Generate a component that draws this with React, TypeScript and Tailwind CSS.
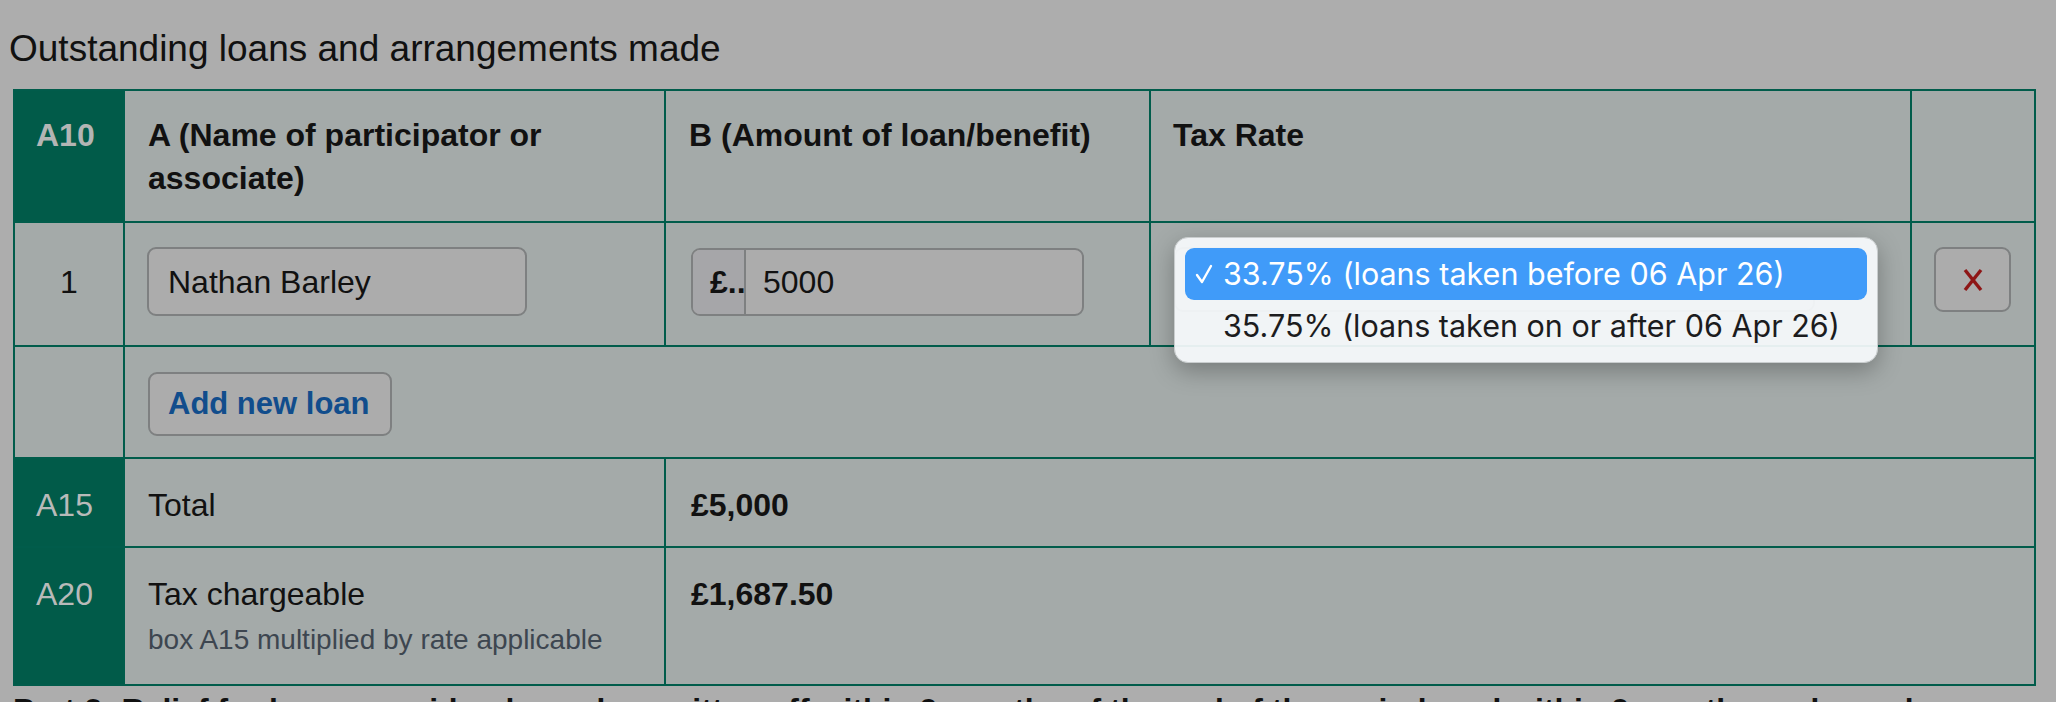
import React from "react";

const cell = "border-r-2 border-b-2 border-[#015c4b]";
const grey = "bg-[#a4aaa9]";
const green = "bg-[#015b49]";

export default function App() {
  return (
    <div className="h-[702px] w-[2056px] overflow-hidden bg-[#adadad] pl-[13px] pt-[22px] font-['Liberation_Sans',Arial,sans-serif] text-[#111111]">
      <h2 className="ml-[-4px] text-[37px] font-normal leading-[54px]">
        Outstanding loans and arrangements made
      </h2>
      <div className="mt-[13px] grid w-[2023px] grid-cols-[110px_541px_485px_761px_124px] border-l-2 border-t-2 border-[#015c4b]">
        {/* header */}
        <div className={`${cell} ${green} h-[132px] pl-[21px] pt-[23px] text-[32px] font-bold leading-[43px] text-[#b3b5b4]`}>
          A10
        </div>
        <div className={`${cell} ${grey} h-[132px] px-[23px] pt-[23px] text-[32px] font-bold leading-[43px]`}>
          A (Name of participator or associate)
        </div>
        <div className={`${cell} ${grey} h-[132px] px-[23px] pt-[23px] text-[32px] font-bold leading-[43px]`}>
          B (Amount of loan/benefit)
        </div>
        <div className={`${cell} ${grey} h-[132px] px-[22px] pt-[23px] text-[32px] font-bold leading-[43px]`}>
          Tax Rate
        </div>
        <div className={`${cell} ${grey} h-[132px]`} />

        {/* row 1 */}
        <div className={`${cell} ${grey} flex h-[124px] justify-center pt-[24px]`}>
          <div className="flex h-[69px] items-center text-[32px]">1</div>
        </div>
        <div className={`${cell} ${grey} h-[124px] pl-[22px] pt-[24px]`}>
          <div className="flex h-[69px] w-[380px] items-center rounded-[9px] border-2 border-[#7e8081] bg-[#acacac] px-[19px] text-[32px]">
            Nathan Barley
          </div>
        </div>
        <div className={`${cell} ${grey} h-[124px] pl-[25px] pt-[25px]`}>
          <div className="flex h-[68px] w-[393px] overflow-hidden rounded-[9px] border-2 border-[#7e8081] bg-[#acacac] text-[32px]">
            <div className="flex w-[53px] items-center border-r-2 border-[#7e8081] bg-[#a6a6a9] pl-[17px] font-bold">
              £..
            </div>
            <div className="flex items-center pl-[17px]">5000</div>
          </div>
        </div>
        <div className={`${cell} ${grey} relative h-[124px] pl-[23px] pt-[24px]`}>
          <div className="h-[65px] w-[641px] rounded-[9px] border-2 border-[#7e8081] bg-[#acacac]" />
          <div className="absolute left-[23px] top-[14px] z-10 h-[126px] w-[704px] rounded-[14px] border border-[#c9cdce] bg-[rgba(246,250,252,0.93)] p-[10px] font-['Inter',sans-serif] text-[30.5px] shadow-[0_8px_24px_rgba(0,0,0,0.28)]">
            <div className="flex h-[52px] items-center rounded-[9px] bg-[#409bf9] pl-[10px] text-white">
              <svg width="18" height="22" viewBox="0 0 18 22" className="mr-[10px]">
                <polyline points="2,12 7,19 16,3" fill="none" stroke="#ffffff" strokeWidth="2.4" strokeLinecap="round" strokeLinejoin="round" />
              </svg>
              <span className="whitespace-nowrap">33.75% (loans taken before 06 Apr 26)</span>
            </div>
            <div className="flex h-[52px] items-center whitespace-nowrap pl-[38px] text-[#1c1c1e]">
              35.75% (loans taken on or after 06 Apr 26)
            </div>
          </div>
        </div>
        <div className={`${cell} ${grey} h-[124px] pl-[22px] pt-[24px]`}>
          <div className="flex h-[65px] w-[77px] items-center justify-center rounded-[9px] border-2 border-[#7e8081] bg-[#acacac]">
            <svg width="22" height="24" viewBox="0 0 22 24">
              <line x1="3" y1="2" x2="19" y2="22" stroke="#8e1616" strokeWidth="3.4" />
              <line x1="19" y1="2" x2="3" y2="22" stroke="#8e1616" strokeWidth="3.4" />
            </svg>
          </div>
        </div>

        {/* add row */}
        <div className={`${cell} ${grey} h-[112px]`} />
        <div className={`${cell} ${grey} col-span-4 h-[112px] pl-[23px] pt-[25px]`}>
          <div className="inline-flex h-[64px] w-[244px] items-center whitespace-nowrap rounded-[9px] border-2 border-[#7e8081] bg-[#acacac] pl-[18px] text-[31px] font-bold text-[#114d8c]">
            Add new loan
          </div>
        </div>

        {/* A15 */}
        <div className={`${cell} ${green} h-[89px] pl-[21px] pt-[25px] text-[32px] leading-[43px] text-[#b8bab9]`}>
          A15
        </div>
        <div className={`${cell} ${grey} h-[89px] px-[23px] pt-[25px] text-[32px] leading-[43px]`}>Total</div>
        <div className={`${cell} ${grey} col-span-3 h-[89px] px-[25px] pt-[25px] text-[32px] font-bold leading-[43px]`}>
          £5,000
        </div>

        {/* A20 */}
        <div className={`${cell} ${green} h-[138px] pl-[21px] pt-[25px] text-[32px] leading-[43px] text-[#b8bab9]`}>
          A20
        </div>
        <div className={`${cell} ${grey} h-[138px] px-[23px] pt-[25px]`}>
          <div className="text-[32px] leading-[43px]">Tax chargeable</div>
          <div className="mt-[4px] text-[28px] leading-[40px] text-[#3d4650]">box A15 multiplied by rate applicable</div>
        </div>
        <div className={`${cell} ${grey} col-span-3 h-[138px] px-[25px] pt-[25px] text-[32px] font-bold leading-[43px]`}>
          £1,687.50
        </div>
      </div>
      <p className="mt-[3px] whitespace-nowrap text-[32px] font-bold leading-[43px]">
        Part 2: Relief for loans repaid, released or written off within 9 months of the end of the period, and within 9 months and one day
      </p>
    </div>
  );
}
